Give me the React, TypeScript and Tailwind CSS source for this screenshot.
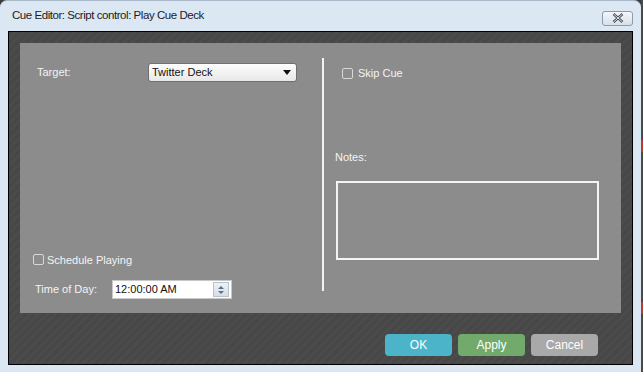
import { useState } from 'react';

function Checkbox({ checked, onChange }: { checked: boolean; onChange: () => void }) {
  return (
    <button
      onClick={onChange}
      className="w-[11px] h-[11px] border border-[#d8d8d8] rounded-[2px] bg-[#8c8c8c] flex items-center justify-center shrink-0"
    >
      {checked && <span className="text-[9px] leading-none text-white">✓</span>}
    </button>
  );
}

export default function App() {
  const [skip, setSkip] = useState(false);
  const [schedule, setSchedule] = useState(false);

  return (
    <div className="w-[643px] h-[372px] bg-[#3c3c3c] flex overflow-hidden font-['Liberation_Sans',sans-serif]">
      <div className="w-[641px] h-full bg-[#dce7f4] rounded-tl-[7px] rounded-tr-[7px] flex flex-col px-[8px] pb-[7px] border-t border-[#a9b7c8]">
        {/* title bar */}
        <div className="h-[30px] flex items-center justify-between">
          <span className="pl-[4px] text-[11.5px] text-[#1b1b1b] tracking-[-0.45px]">
            Cue Editor: Script control: Play Cue Deck
          </span>
          <button className="w-[31px] h-[15px] mt-[4px] border border-[#8e9aa8] rounded-[3px] bg-gradient-to-b from-[#f4f7fb] to-[#d7e0ea] flex items-center justify-center">
            <svg width="12" height="10" viewBox="0 0 12 10">
              <path d="M1.5 1 L10.5 9 M10.5 1 L1.5 9" stroke="#3d4650" strokeWidth="2.4" />
              <path d="M1.5 1 L10.5 9 M10.5 1 L1.5 9" stroke="#f5f5f5" strokeWidth="0.9" />
            </svg>
          </button>
        </div>

        {/* dark content area */}
        <div className="flex-1 border border-black bg-[repeating-linear-gradient(135deg,#474747_0px,#474747_3px,#4b4b4b_3px,#4b4b4b_6px)] pt-[11px] pl-[11px] flex flex-col">
          <div className="w-[601px] h-[270px] bg-[#8c8c8c] flex text-[11px] text-[#f4f4f4]">
            {/* left column */}
            <div className="w-[302px] flex flex-col pt-[20px] pb-[14px]">
              <div className="flex items-center ml-[17px]">
                <span className="w-[111px]">Target:</span>
                <div className="w-[149px] h-[19px] rounded-[3px] border border-[#707070] bg-gradient-to-b from-[#fdfdfd] to-[#e8e8e8] flex items-center justify-between pl-[3px] pr-[5px] text-[#111]">
                  <span>Twitter Deck</span>
                  <svg width="8" height="5" viewBox="0 0 8 5">
                    <path d="M0 0 H8 L4 5 Z" fill="#111" />
                  </svg>
                </div>
              </div>
              <div className="flex-1" />
              <div className="flex items-center ml-[13px] gap-[3px]">
                <Checkbox checked={schedule} onChange={() => setSchedule(!schedule)} />
                <span>Schedule Playing</span>
              </div>
              <div className="flex items-center ml-[15px] mt-[12px]">
                <span className="w-[77px]">Time of Day:</span>
                <div className="w-[120px] h-[19px] bg-white border border-[#c8c8c8] flex items-center justify-between pl-[2px] pr-[2px] text-[#111]">
                  <span>12:00:00 AM</span>
                  <div className="w-[16px] h-[15px] border border-[#b8c2cc] bg-gradient-to-b from-[#eef2f6] to-[#d6dde5] flex flex-col items-center justify-center gap-[2px]">
                    <svg width="6" height="3" viewBox="0 0 6 3"><path d="M0 3 L3 0 L6 3 Z" fill="#5f6f86" /></svg>
                    <svg width="6" height="3" viewBox="0 0 6 3"><path d="M0 0 L6 0 L3 3 Z" fill="#5f6f86" /></svg>
                  </div>
                </div>
              </div>
            </div>

            {/* divider */}
            <div className="w-[2px] bg-[#f4f4f4] mt-[15px] mb-[22px]" />

            {/* right column */}
            <div className="flex-1 flex flex-col pt-[22px]">
              <div className="flex items-center ml-[18px] gap-[5px]">
                <Checkbox checked={skip} onChange={() => setSkip(!skip)} />
                <span>Skip Cue</span>
              </div>
              <span className="ml-[11px] mt-[67px]">Notes:</span>
              <textarea className="ml-[12px] mt-[16px] w-[263px] h-[79px] border-2 border-[#f4f4f4] bg-transparent outline-none resize-none text-[11px] text-white p-1" />
            </div>
          </div>

          {/* buttons */}
          <div className="flex justify-end gap-[6px] mt-[21px] pr-[34px] text-[12px] text-white">
            <button className="w-[67px] h-[22px] rounded-[4px] bg-[#4bb4c9]">OK</button>
            <button className="w-[67px] h-[22px] rounded-[4px] bg-[#72aa6c]">Apply</button>
            <button className="w-[67px] h-[22px] rounded-[4px] bg-[#a9a9a9]">Cancel</button>
          </div>
        </div>
      </div>
      <div className="flex-1 bg-[#4a4a4a] flex flex-col">
        <div className="h-[12px] w-full bg-[#c0392b] mt-[140px]" />
        <div className="h-[12px] w-full bg-[#c0392b] mt-[150px]" />
      </div>
    </div>
  );
}
